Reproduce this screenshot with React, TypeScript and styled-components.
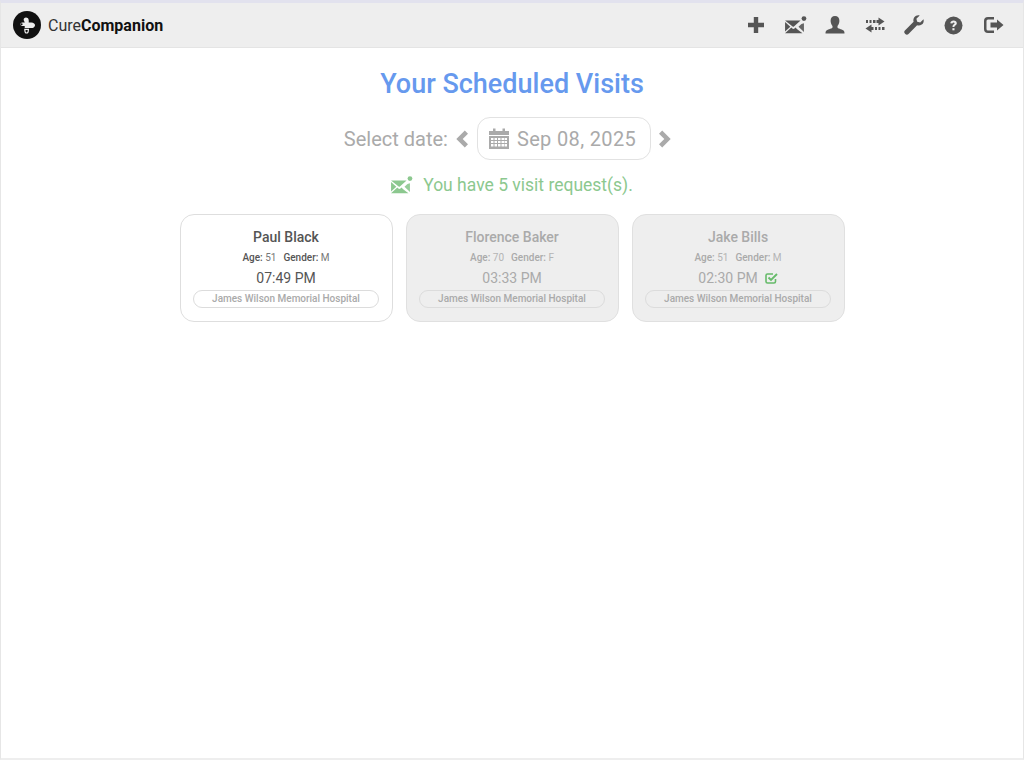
import React from 'react'
import styled, { createGlobalStyle } from 'styled-components'

const GlobalStyle = createGlobalStyle`
  html, body {
    margin: 0;
    padding: 0;
    background: #fff;
  }
  body {
    font-family: Roboto, "Liberation Sans", sans-serif;
  }
`

const Page = styled.div`
  box-sizing: border-box;
  width: 1024px;
  height: 760px;
  overflow: hidden;
  background: #fff;
  border-top: 3px solid #e2e2ee;
  border-left: 1px solid #e6e6e6;
  border-right: 1px solid #e6e6e6;
  border-bottom: 2px solid #eeeeee;
`

const Header = styled.header`
  display: flex;
  align-items: center;
  justify-content: space-between;
  height: 45px;
  padding: 0 10px 0 12px;
  background: #eeeeee;
  border-bottom: 1px solid #e4e4e4;
  box-sizing: border-box;
`

const Brand = styled.div`
  display: flex;
  align-items: center;
  gap: 7px;
  font-size: 16px;
  color: #333;
`

const BrandStrong = styled.b`
  font-weight: 700;
  color: #111;
`

const Nav = styled.nav`
  display: flex;
  align-items: center;
  gap: 0;
`

const NavItem = styled.span`
  display: flex;
  align-items: center;
  justify-content: center;
  width: 39.5px;
  height: 44px;
  color: #555;
`

const Main = styled.main`
  display: flex;
  flex-direction: column;
  align-items: center;
  padding-top: 18px;
`

const Title = styled.h1`
  margin: 0;
  font-size: 27px;
  line-height: 36px;
  font-weight: 500;
  color: #6699ee;
`

const DateRow = styled.div`
  display: flex;
  align-items: center;
  margin-top: 15px;
  color: #aaa;
  font-size: 20px;
`

const Arrow = styled.span`
  display: flex;
  margin: 0 8px 0 7px;
  color: #aaa;
`

const DateBox = styled.div`
  display: flex;
  align-items: center;
  gap: 8px;
  box-sizing: border-box;
  height: 43px;
  padding: 0 14px 0 11px;
  border: 1px solid #e2e2e2;
  border-radius: 13px;
  letter-spacing: 0.35px;
`

const Requests = styled.div`
  display: flex;
  align-items: center;
  gap: 10px;
  margin-top: 13px;
  height: 24px;
  font-size: 17.5px;
  color: #8cc88f;
`

const Cards = styled.div`
  display: flex;
  gap: 13px;
  margin-top: 17px;
`

const Card = styled.div<{ $muted?: boolean }>`
  box-sizing: border-box;
  width: 213px;
  height: 108px;
  padding: 13px 13px 0;
  display: flex;
  flex-direction: column;
  align-items: center;
  border: 1px solid ${p => (p.$muted ? '#e0e0e0' : '#dedede')};
  border-radius: 14px;
  background: ${p => (p.$muted ? '#eeeeee' : '#fff')};
  color: ${p => (p.$muted ? '#aaa' : '#555')};
`

const Name = styled.div`
  font-size: 14px;
  line-height: 18px;
  font-weight: 500;
`

const Info = styled.div`
  display: flex;
  gap: 7px;
  margin-top: 5px;
  font-size: 10px;
  line-height: 14px;
`

const InfoLabel = styled.b`
  font-weight: 500;
`

const InfoValue = styled.span<{ $muted?: boolean }>`
  color: ${p => (p.$muted ? '#b4b4b4' : '#777')};
`

const Time = styled.div`
  display: flex;
  align-items: center;
  gap: 7px;
  margin-top: 3px;
  font-size: 14px;
  line-height: 20px;
`

const Hospital = styled.div`
  box-sizing: border-box;
  width: 186px;
  height: 18px;
  margin-top: 2px;
  border: 1px solid #dcdcdc;
  border-radius: 9px;
  font-size: 10px;
  line-height: 15px;
  font-weight: 500;
  text-align: center;
  color: #aaa;
`

const Logo = () => (
  <svg width="28" height="28" viewBox="0 0 28 28">
    <circle cx="14" cy="14" r="14" fill="#111" />
    <path
      d="M11 7.5c1.6-1.6 4-.9 4.6 1 .3 1 .2 2 .1 3h2.6c2.3 0 3.9 1.4 3.7 3-.2 1.7-1.9 2.6-3.7 2.6h-6.6V15H9.2a1.8 1.8 0 0 1 0-3.6h2.6c-.5-1.4-1.8-2.6-.8-3.9z"
      fill="#eee"
    />
    <circle cx="8.6" cy="13.2" r="1" fill="#111" />
    <path d="M11.8 18.4h3.6c0 2.3-.5 3.6-1.8 3.6s-1.8-1.3-1.8-3.6z" fill="none" stroke="#eee" strokeWidth="1.2" />
  </svg>
)

const PlusIcon = () => (
  <svg width="18" height="18" viewBox="0 0 18 18" fill="currentColor">
    <path d="M6.8 1h4.4v5.8H17v4.4h-5.8V17H6.8v-5.8H1V6.8h5.8z" />
  </svg>
)

const MailIcon = ({ size = 22 }: { size?: number }) => (
  <svg width={size} height={size * 0.86} viewBox="0 0 22 19" fill="currentColor">
    <circle cx="19" cy="2.6" r="2.4" />
    <path d="M0 4.4h15.6L8.9 10.6a1 1 0 0 1-1.3 0L0 4.400z" />
    <path d="M0 6l5.300 4.700L0 15.600z" />
    <path d="M19 7.300V16l-5.500-5.300 3-2.700z" opacity="0.9" />
    <path d="M6.300 11.600l1 .9c.7.6 1.500.6 2.200 0l1-.9 1.700 1.700 5.300 4.100H0l.8-.8z" />
  </svg>
)

const UserIcon = () => (
  <svg width="20" height="20" viewBox="0 0 20 20" fill="currentColor">
    <path d="M10 1c2.800 0 4.400 2 4.400 4.800 0 2.200-.9 4.200-1.900 5.200v1.400c0 1 4 1.500 6 3 .8.600 1 1.600 1 3.100H.5c0-1.500.2-2.500 1-3.100 2-1.500 6-2 6-3V11c-1-1-1.900-3-1.900-5.200C5.600 3 7.200 1 10 1z" />
  </svg>
)

const TransferIcon = () => (
  <svg width="20" height="18" viewBox="0 0 20 18" fill="currentColor">
    <path d="M13.500 1.500L19.500 5.500l-6 4V7H11.500V4h2z" />
    <path d="M1 4h2v3H1zM4.500 4h2v3h-2zM8 4h2.500v3H8z" />
    <path d="M6.500 8.500v2.500h2v3h-2v2.500l-6-4z" />
    <path d="M10 11h2v3h-2zM13.500 11h2v3h-2zM17 11h2.500v3H17z" />
  </svg>
)

const WrenchIcon = () => (
  <svg width="20" height="20" viewBox="0 0 20 20" fill="currentColor">
    <path d="M19.500 4.200c.6 2-.1 4.200-1.800 5.400-1.400 1-3.100 1.200-4.600.7L4.500 19c-.9.900-2.300.9-3.200 0l-.4-.4c-.9-.9-.9-2.300 0-3.200l8.700-8.600c-.5-1.500-.3-3.200.7-4.600C11.500.500 13.700-.2 15.700.4l-3.300 3.300.8 3 3 .8z" />
  </svg>
)

const HelpIcon = () => (
  <svg width="19" height="19" viewBox="0 0 19 19">
    <circle cx="9.500" cy="9.500" r="9" fill="currentColor" />
    <path d="M6.300 7.300c.2-1.700 1.500-2.700 3.300-2.700 1.900 0 3.200 1 3.200 2.600 0 1.100-.6 1.700-1.400 2.200-.7.500-1 .7-1 1.500H8.500c0-1.500.5-2.100 1.300-2.600.5-.3.800-.6.800-1 0-.5-.4-.8-1-.8-.7 0-1.100.4-1.200 1z" fill="#eee" />
    <rect x="8.400" y="12.200" width="2.100" height="2.100" fill="#eee" />
  </svg>
)

const LogoutIcon = () => (
  <svg width="21" height="18" viewBox="0 0 21 18" fill="currentColor">
    <path d="M5 1h6v2.500H5A1.500 1.500 0 0 0 3.500 5v8A1.500 1.500 0 0 0 5 14.500h6V17H5a4 4 0 0 1-4-4V5a4 4 0 0 1 4-4z" />
    <path d="M14 3.500L20.500 9 14 14.500V11.500H7.500v-5H14z" />
  </svg>
)

const ChevronLeft = () => (
  <svg width="14" height="18" viewBox="0 0 14 18" fill="currentColor">
    <path d="M9.800 0.500L13 3.700 7.700 9 13 14.300 9.800 17.500 1.300 9z" />
  </svg>
)

const ChevronRight = () => (
  <svg width="14" height="18" viewBox="0 0 14 18" fill="currentColor">
    <path d="M4.200 0.500L1 3.700 6.300 9 1 14.300 4.200 17.500 12.700 9z" />
  </svg>
)

const CalendarIcon = () => (
  <svg width="20" height="21" viewBox="0 0 20 21" fill="currentColor">
    <path d="M4 .5h2.500V3h7V.5H16V3h4v4H0V3h4z" />
    <path fillRule="evenodd" d="M0 8h20v13H0zM2 10v2h2.500v-2zm3.500 0v2h2.500v-2zm3.500 0v2h2.500v-2zm3.500 0v2h2.500v-2zm3 0v2H18v-2zM2 13v2h2.500v-2zm3.500 0v2h2.500v-2zm3.500 0v2h2.500v-2zm3.500 0v2h2.500v-2zm3 0v2H18v-2zM2 16v2.500h2.500V16zm3.500 0v2.500h2.500V16zm3.500 0v2.500h2.500V16zm3.500 0v2.500h2.500V16zm3 0v2.500H18V16z" />
  </svg>
)

const CheckIcon = () => (
  <svg width="13" height="12" viewBox="0 0 13 12" fill="none" stroke="#66bb6a" strokeWidth="1.600">
    <path d="M10.500 7v2.500a1.500 1.500 0 0 1-1.500 1.500H2.500A1.500 1.500 0 0 1 1 9.500v-6A1.500 1.500 0 0 1 2.500 2H8" />
    <path d="M3.500 5.500L6 8l6-6" strokeWidth="1.900" />
  </svg>
)

const visits = [
  { name: 'Paul Black', age: 51, gender: 'M', time: '07:49 PM', muted: false, done: false },
  { name: 'Florence Baker', age: 70, gender: 'F', time: '03:33 PM', muted: true, done: false },
  { name: 'Jake Bills', age: 51, gender: 'M', time: '02:30 PM', muted: true, done: true },
]

const App = () => (
  <Page>
    <GlobalStyle />
    <Header>
      <Brand>
        <Logo />
        <span>
          Cure<BrandStrong>Companion</BrandStrong>
        </span>
      </Brand>
      <Nav>
        <NavItem><PlusIcon /></NavItem>
        <NavItem><MailIcon /></NavItem>
        <NavItem><UserIcon /></NavItem>
        <NavItem><TransferIcon /></NavItem>
        <NavItem><WrenchIcon /></NavItem>
        <NavItem><HelpIcon /></NavItem>
        <NavItem><LogoutIcon /></NavItem>
      </Nav>
    </Header>
    <Main>
      <Title>Your Scheduled Visits</Title>
      <DateRow>
        <span>Select date:</span>
        <Arrow><ChevronLeft /></Arrow>
        <DateBox>
          <CalendarIcon />
          <span>Sep 08, 2025</span>
        </DateBox>
        <Arrow><ChevronRight /></Arrow>
      </DateRow>
      <Requests>
        <MailIcon />
        <span>You have 5 visit request(s).</span>
      </Requests>
      <Cards>
        {visits.map(v => (
          <Card key={v.name} $muted={v.muted}>
            <Name>{v.name}</Name>
            <Info>
              <span>
                <InfoLabel>Age:</InfoLabel> <InfoValue $muted={v.muted}>{v.age}</InfoValue>
              </span>
              <span>
                <InfoLabel>Gender:</InfoLabel> <InfoValue $muted={v.muted}>{v.gender}</InfoValue>
              </span>
            </Info>
            <Time>
              {v.time}
              {v.done && <CheckIcon />}
            </Time>
            <Hospital>James Wilson Memorial Hospital</Hospital>
          </Card>
        ))}
      </Cards>
    </Main>
  </Page>
)

export default App
